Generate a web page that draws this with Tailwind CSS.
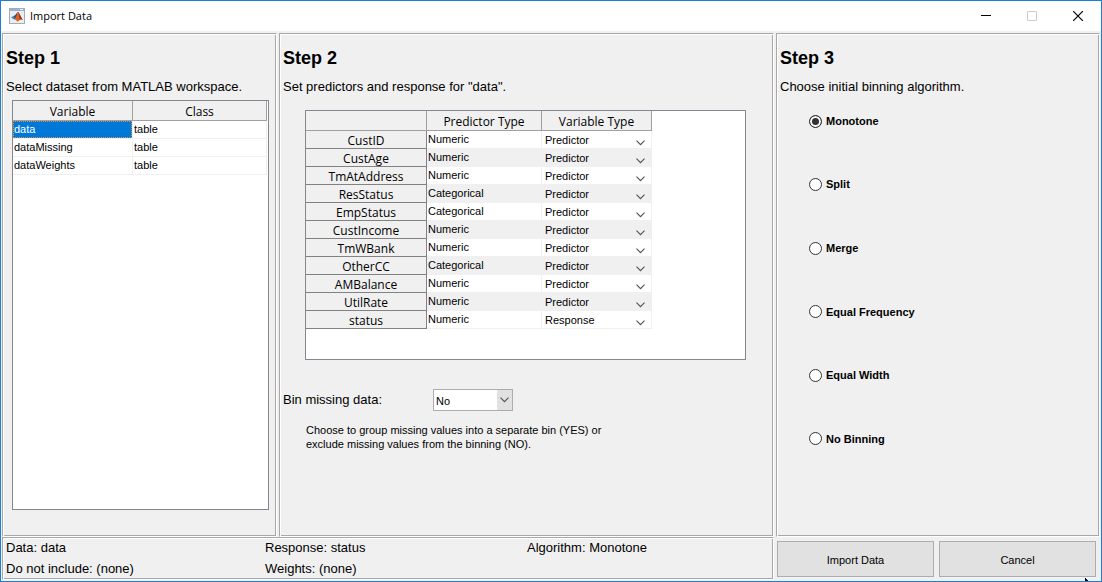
<!DOCTYPE html>
<html lang="en">
<head>
<meta charset="utf-8">
<title>Import Data</title>
<script src="https://cdn.jsdelivr.net/npm/@tailwindcss/browser@4"></script>
</head>
<body class="bg-[#f0f0f0] text-black font-['Liberation_Sans',Arial,sans-serif]">
<div class="relative flex min-h-screen flex-col border border-[#1c7fd3]">
  <header class="flex h-[30px] shrink-0 items-center bg-white pl-2">
    <svg class="size-4 shrink-0" viewBox="0 0 16 16" aria-hidden="true">
      <rect x=".5" y=".5" width="15" height="15" fill="#e9eef3" stroke="#a3adb8"/>
      <rect x="1" y="1" width="14" height="2" fill="#8fb4d6"/>
      <rect x="11" y="1" width="3" height="1" fill="#e8f1f8"/>
      <path d="M2 9.300 5.200 7.800 7 9.500 5 11.400z" fill="#3d83b8"/>
      <path d="M5.200 7.800C6.800 7.500 7.500 4.500 9 3.800L7.600 9.200 5.500 11z" fill="#274f7a"/>
      <path d="M9 3.800C10.500 5 11.700 9.500 14 12 12.500 11.200 11.500 11 10.600 12 9.700 13.200 9 13.500 8.200 13.600 7.400 12 6.500 11.500 5 11.400 7.300 10 8 6 9 3.800z" fill="#df6420"/>
      <path d="M9 3.800C10.500 5 11.700 9.500 14 12 12.500 11.200 11.500 11 10.600 12 10.500 9 10 6 9 3.800z" fill="#9c2b17"/>
    </svg>
    <h1 class="ml-[5px] flex-1 font-['Open_Sans','Noto_Sans',sans-serif] text-[11px]">Import Data</h1>
    <button class="flex h-[30px] w-[46px] items-center justify-center" aria-label="Minimize"><svg class="size-[10px]" viewBox="0 0 10 10"><path d="M0 4.500H10" stroke="#000"/></svg></button>
    <button class="flex h-[30px] w-[46px] items-center justify-center" aria-label="Maximize" disabled><svg class="size-[10px]" viewBox="0 0 10 10"><path d="M.5.5h9v9h-9z" fill="none" stroke="#ccc"/></svg></button>
    <button class="flex h-[30px] w-[46px] items-center justify-center" aria-label="Close"><svg class="size-[10px]" viewBox="0 0 10 10"><path d="M0 0 10 10M10 0 0 10" stroke="#000" stroke-width="1.200"/></svg></button>
  </header>

  <main class="grid flex-1 grid-cols-[275fr_495fr_324fr] grid-rows-[1fr_auto] gap-x-0.5 pt-0.5 pr-px pb-px pl-px">
    <section class="flex min-w-0 flex-col border border-t-[#a8a8a8] border-r-white border-b-white border-l-[#a8a8a8] pt-3 pr-[7px] pb-[26px] pl-[3px] shadow-[inset_1px_1px_0_#fff,inset_-1px_-1px_0_#a8a8a8]">
      <h2 class="text-[18px] leading-6 font-bold">Step 1</h2>
      <p class="mt-[7px] text-[13px] leading-5 whitespace-nowrap">Select dataset from MATLAB workspace.</p>
      <div class="mt-[3px] ml-[6px] flex-1 border border-[#828790] bg-white pr-px">
        <table class="w-full table-fixed border-separate border-spacing-0 text-[11px]">
          <colgroup><col class="w-[120px]"><col></colgroup>
          <thead class="font-['Open_Sans','Noto_Sans',sans-serif] text-[12px]">
            <tr class="h-5 bg-[#f0f0f0]">
              <th scope="col" class="border-r border-b border-[#a0a0a0] p-0 pt-[2px] leading-[17px] font-normal">Variable</th>
              <th scope="col" class="border-r border-b border-[#a0a0a0] p-0 pt-[2px] leading-[17px] font-normal">Class</th>
            </tr>
          </thead>
          <tbody id="datasets"></tbody>
        </table>
      </div>
    </section>

    <section class="flex min-w-0 flex-col border border-t-[#a8a8a8] border-r-white border-b-white border-l-[#a8a8a8] pt-3 pr-[27px] pl-[3px] shadow-[inset_1px_1px_0_#fff,inset_-1px_-1px_0_#a8a8a8]">
      <h2 class="text-[18px] leading-6 font-bold">Step 2</h2>
      <p class="mt-[7px] text-[13px] leading-5">Set predictors and response for "data".</p>
      <div class="mt-[13px] ml-[22px] min-h-[250px] border border-[#828790] bg-white">
        <table class="w-[346px] table-fixed border-separate border-spacing-0 text-[11px]">
          <colgroup><col class="w-[121px]"><col class="w-[115px]"><col class="w-[110px]"></colgroup>
          <thead class="font-['Open_Sans','Noto_Sans',sans-serif] text-[12px]">
            <tr class="h-5 bg-[#f0f0f0]">
              <td class="border-r border-b border-[#a0a0a0] p-0"></td>
              <th scope="col" class="border-r border-b border-[#a0a0a0] p-0 pt-[2px] leading-[17px] font-normal">Predictor Type</th>
              <th scope="col" class="border-r border-b border-[#a0a0a0] p-0 pt-[2px] leading-[17px] font-normal">Variable Type</th>
            </tr>
          </thead>
          <tbody id="predictors"></tbody>
        </table>
      </div>
      <div class="mt-[29px] flex items-center">
        <label for="bin" class="w-[150px] text-[13px] leading-5">Bin missing data:</label>
        <div class="relative h-[22px] w-20">
          <select id="bin" class="block size-full appearance-none border border-[#adadad] bg-white pt-[2px] pl-[2px] text-[11px]"><option>No</option><option>Yes</option></select>
          <span class="pointer-events-none absolute inset-y-px right-px flex w-[15px] items-center justify-center bg-[#e1e1e1]"><svg class="h-[6px] w-[9px]" viewBox="0 0 9 6"><path d="M.5.700 4.500 4.700 8.500.700" fill="none" stroke="#505050" stroke-width="1.100"/></svg></span>
        </div>
      </div>
      <p class="mt-3 ml-[23px] text-[11px] leading-[14px]">Choose to group missing values into a separate bin (YES) or<br>exclude missing values from the binning (NO).</p>
    </section>

    <section class="min-w-0 border border-t-[#a8a8a8] border-r-white border-b-white border-l-[#a8a8a8] pt-3 pl-[3px] shadow-[inset_1px_1px_0_#fff,inset_-1px_-1px_0_#a8a8a8]">
      <h2 class="text-[18px] leading-6 font-bold">Step 3</h2>
      <p class="mt-[7px] text-[13px] leading-5">Choose initial binning algorithm.</p>
      <fieldset id="algorithms" class="mt-4 ml-[29px] flex h-[334px] flex-col items-start justify-between text-[11px] font-bold"></fieldset>
    </section>

    <section class="col-span-2 grid h-[43px] grid-cols-[259px_262px_1fr] content-start border border-t-[#a8a8a8] border-r-white border-b-white border-l-[#a8a8a8] pl-[3px] text-[13px] leading-[20px] shadow-[inset_1px_1px_0_#fff,inset_-1px_-1px_0_#a8a8a8] gap-y-px">
      <p>Data: data</p><p>Response: status</p><p>Algorithm: Monotone</p>
      <p>Do not include: (none)</p><p>Weights: (none)</p>
    </section>

    <div class="grid grid-cols-2 gap-[5px] pt-1 pr-1 pb-[3px] pl-px text-[11px]">
      <button class="border border-[#adadad] bg-[#e1e1e1] pt-[2px]">Import Data</button>
      <button class="border border-[#adadad] bg-[#e1e1e1] pt-[2px]">Cancel</button>
    </div>
  </main>
  <svg class="pointer-events-none absolute right-3 bottom-0 h-[3px] w-[4px]" viewBox="0 0 4 3" aria-hidden="true"><path d="M0 0h1v1h1v1h1v1H0z" fill="#000"/></svg>
</div>

<script>
  const datasets = ['data', 'dataMissing', 'dataWeights'];
  document.getElementById('datasets').innerHTML = datasets.map((name, i) => `
    <tr class="h-[18px]">
      <td class="border-r border-b border-[#f0f0f0] p-0">
        <span class="${i ? 'block h-[17px] pl-px leading-4' : 'block h-[17px] bg-[#0078d7] pl-px leading-4 text-white outline-1 -outline-offset-1 outline-dotted outline-[#e0904a]'}">${name}</span></td>
      <td class="border-r border-b border-[#f0f0f0] p-0 pl-px align-top leading-4">table</td>
    </tr>`).join('');

  const predictors = [['CustID', 'Numeric'], ['CustAge', 'Numeric'], ['TmAtAddress', 'Numeric'], ['ResStatus', 'Categorical'],
    ['EmpStatus', 'Categorical'], ['CustIncome', 'Numeric'], ['TmWBank', 'Numeric'], ['OtherCC', 'Categorical'],
    ['AMBalance', 'Numeric'], ['UtilRate', 'Numeric'], ['status', 'Numeric']];
  document.getElementById('predictors').innerHTML = predictors.map(([name, type]) => `
    <tr class="h-[18px] even:bg-[#f0f0f0]">
      <th scope="row" class="border-r border-b border-[#828282] bg-[#f0f0f0] p-0 pt-[2px] font-['Open_Sans','Noto_Sans',sans-serif] text-[12px] leading-[15px] font-normal">${name}</th>
      <td class="border-r border-b border-[#f0f0f0] p-0 pl-px align-top leading-4">${type}</td>
      <td class="border-r border-b border-[#f0f0f0] p-0">
        <div class="relative h-[17px]">
          <select aria-label="Variable type of ${name}" class="block h-[17px] w-full appearance-none bg-transparent pt-[2px] pl-[3px] text-[11px] leading-[15px]"><option${name === 'status' ? '' : ' selected'}>Predictor</option><option${name === 'status' ? ' selected' : ''}>Response</option></select>
          <svg class="pointer-events-none absolute right-[6px] bottom-[2px] h-[6px] w-[9px]" viewBox="0 0 9 6"><path d="M.5.700 4.500 4.700 8.500.700" fill="none" stroke="#505050" stroke-width="1.100"/></svg>
        </div></td>
    </tr>`).join('');

  const algorithms = ['Monotone', 'Split', 'Merge', 'Equal Frequency', 'Equal Width', 'No Binning'];
  document.getElementById('algorithms').innerHTML = algorithms.map((name, i) => `
    <label class="flex h-4 items-center gap-1">
      <input type="radio" name="algorithm" class="size-[13px] appearance-none rounded-full border border-[#333] bg-white checked:bg-[#333] checked:shadow-[inset_0_0_0_2px_#fff]"${i ? '' : ' checked'}>${name}
    </label>`).join('');
</script>
</body>
</html>
